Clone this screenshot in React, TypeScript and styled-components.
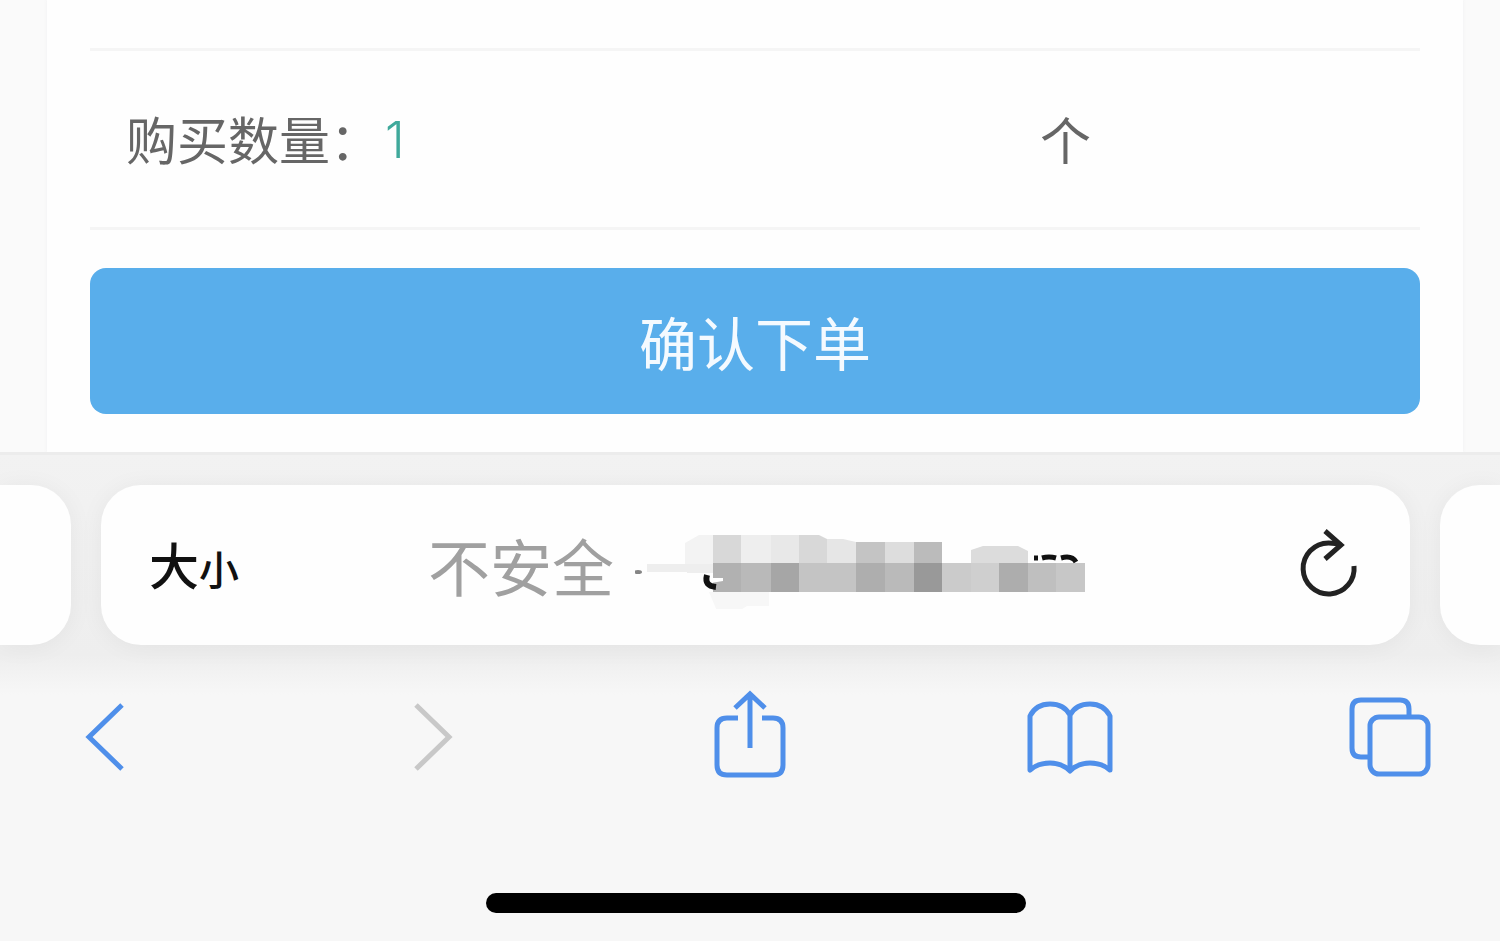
import React from "react";
import styled, { createGlobalStyle } from "styled-components";

const cjk = '"Noto Sans CJK SC", sans-serif';

const GlobalStyle = createGlobalStyle`
  *, *::before, *::after { box-sizing: border-box; }
  body { margin: 0; background: #fff; font-family: ${cjk}; }
  button { border: 0; padding: 0; background: none; font-family: inherit; cursor: pointer; }
`;

const Screen = styled.main`
  display: flex;
  flex-direction: column;
  overflow: hidden;
`;

const Page = styled.section`
  padding: 0 37px 0 47px;
  background: #fafafa;
`;

const OrderForm = styled.form`
  padding: 48px 43px 38px;
  background: #fefefe;
  box-shadow: 0 0 4px #f0f0f2;
`;

const QuantityRow = styled.div`
  display: flex;
  align-items: center;
  height: 182px;
  margin-bottom: 38px;
  padding: 0 0 2px 36px;
  border-top: 3px solid #f5f5f5;
  border-bottom: 3px solid #f5f5f5;
  color: #666;
  font-size: 51px;
  line-height: 72px;
`;

const QuantityInput = styled.input`
  flex: 1;
  min-width: 0;
  height: 72px;
  padding: 4px 0 0 4px;
  border: 0;
  outline: 0;
  background: none;
  color: #3fa99b;
  font: 300 50px/68px Inter, sans-serif;
`;

const Unit = styled.span`
  width: 380px;
`;

const SubmitButton = styled.button`
  display: block;
  width: 100%;
  height: 146px;
  border-radius: 16px;
  background: #59aeeb;
  color: #f4faff;
  font-size: 58px;
  line-height: 84px;
`;

const Browser = styled.section`
  border-top: 3px solid #ececec;
  background: linear-gradient(#f2f2f2 0, #eeeeee 200px, #f7f7f7 240px);
`;

const TabStrip = styled.div`
  display: flex;
  gap: 30px;
  padding-top: 30px;
`;

const TabEdge = styled.div<{ $side: "left" | "right" }>`
  width: ${(p) => (p.$side === "left" ? 71 : 60)}px;
  height: 160px;
  border-radius: ${(p) => (p.$side === "left" ? "0 40px 40px 0" : "40px 0 0 40px")};
  background: #fefefe;
  box-shadow: 0 2px 24px rgba(0, 0, 0, 0.05);
`;

const AddressBar = styled.div`
  display: flex;
  flex: 1;
  align-items: center;
  justify-content: space-between;
  height: 160px;
  padding: 0 48px;
  border-radius: 40px;
  background: #fefefe;
  box-shadow: 0 2px 24px rgba(0, 0, 0, 0.05);
`;

const TextSizeButton = styled.button`
  color: #111;
  font-size: 50px;
  font-weight: 500;
  line-height: 72px;
`;

const SmallGlyph = styled.span`
  font-size: 40px;
`;

const Address = styled.div`
  display: flex;
  align-items: center;
  gap: 21px;
  padding-right: 22px;
  color: #a0a0a0;
  font-size: 62px;
  line-height: 88px;
`;

const ReloadButton = styled.button`
  display: flex;
`;

const Toolbar = styled.nav`
  display: flex;
  justify-content: space-between;
  padding: 45px 64px 0 60px;
`;

const ToolButton = styled.button<{ $muted?: boolean }>`
  display: flex;
  color: ${(p) => (p.$muted ? "#c8c8c8" : "#4f8fea")};
  svg {
    fill: none;
    stroke: currentColor;
    stroke-width: 5;
  }
`;

const HomeArea = styled.div`
  display: flex;
  justify-content: center;
  padding: 107px 0 28px 11px;
`;

const HomeIndicator = styled.div`
  width: 36vw;
  height: 20px;
  border-radius: 10px;
  background: #000;
`;

const upperBlocks = [
  [50, 28, "#d8d8d8"], [78, 30, "#eeeeee"], [108, 28, "#e8e8e8"],
];
const lowerBlocks = [
  [50, 28, "#b1b1b1"], [78, 30, "#b9b9b9"], [108, 28, "#a6a6a6"], [136, 57, "#c4c4c4"],
  [193, 29, "#aeaeae"], [222, 29, "#bababa"], [251, 28, "#999999"], [279, 29, "#cbcbcb"],
  [308, 28, "#cfcfcf"], [336, 29, "#adadad"], [365, 28, "#bfbfbf"], [393, 29, "#c7c7c7"],
];

function MaskedHost() {
  return (
    <svg width="452" height="88" viewBox="-28 -2 452 88" role="img" aria-label="网址已隐藏">
      <path d="M-16 41H50V50H24V49H-16z" fill="#eeeeee" />
      <ellipse cx="-25" cy="49" rx="4" ry="2" fill="#858585" />
      <path d="M50 12H36l-14 8v21h28z" fill="#f3f3f3" />
      {upperBlocks.map(([x, w, c]) => (
        <rect key={x} x={x} y="12" width={w} height="29" fill={String(c)} />
      ))}
      <path d="M136 12h20l8 4v25h-28z" fill="#d8d8d8" />
      <path d="M164 16h16l13 3v22h-29z" fill="#e6e6e6" />
      <rect x="193" y="19" width="29" height="22" fill="#c4c4c4" />
      <rect x="222" y="19" width="29" height="22" fill="#dddddd" />
      <rect x="251" y="19" width="28" height="22" fill="#bbbbbb" />
      <path d="M308 27l12-4h35l10 5v13h-57z" fill="#dcdcdc" />
      {lowerBlocks.map(([x, w, c]) => (
        <rect key={x} x={x} y="40" width={w} height="29" fill={String(c)} />
      ))}
      <path d="M46 69h60v14H84l-8 5H54z" fill="#f7f7f7" />
      <path d="M46 55h14v3l-12 2z" fill="#fff" />
      <path d="M44 52c-2 8 1 11 9 12" stroke="#111" strokeWidth="6" fill="none" />
      <path d="M371 35h4M379 35q7-2 14 0M398 35q11-3 15 4" stroke="#111" strokeWidth="5" fill="none" />
    </svg>
  );
}

function Glyph({ children }: { children: React.ReactNode }) {
  return (
    <svg width="88" height="96" viewBox="0 0 88 96" aria-hidden="true">
      {children}
    </svg>
  );
}

export default function App() {
  return (
    <Screen>
      <GlobalStyle />
      <Page>
        <OrderForm onSubmit={(e) => e.preventDefault()}>
          <QuantityRow>
            <label htmlFor="quantity">购买数量：</label>
            <QuantityInput id="quantity" inputMode="numeric" defaultValue="1" />
            <Unit>个</Unit>
          </QuantityRow>
          <SubmitButton type="submit">确认下单</SubmitButton>
        </OrderForm>
      </Page>
      <Browser>
        <TabStrip>
          <TabEdge $side="left" />
          <AddressBar>
            <TextSizeButton type="button">
              大<SmallGlyph>小</SmallGlyph>
            </TextSizeButton>
            <Address>
              <span>不安全</span>
              <MaskedHost />
            </Address>
            <ReloadButton type="button" aria-label="重新载入">
              <svg width="64" height="80" viewBox="0 0 64 80" fill="none" stroke="#222" strokeWidth="5">
                <path d="M56 41A25.500 25.500 0 1 1 30.500 18Q38 18 43 20" />
                <path d="M27 6L43 20L27 34" />
              </svg>
            </ReloadButton>
          </AddressBar>
          <TabEdge $side="right" />
        </TabStrip>
        <Toolbar aria-label="浏览器工具栏">
          <ToolButton type="button" aria-label="后退">
            <Glyph><path d="M62 15L29 47L62 79" /></Glyph>
          </ToolButton>
          <ToolButton type="button" aria-label="前进" $muted disabled>
            <Glyph><path d="M34 15L67 47L34 79" /></Glyph>
          </ToolButton>
          <ToolButton type="button" aria-label="分享">
            <Glyph>
              <path d="M34 28H23Q13 28 13 38V75Q13 85 23 85H69Q79 85 79 75V38Q79 28 69 28H58" />
              <path d="M46 58V4M31 18L46 4L61 18" />
            </Glyph>
          </ToolButton>
          <ToolButton type="button" aria-label="书签">
            <Glyph>
              <path strokeLinejoin="round" d="M4 80V26Q10 14 24 14Q38 14 44 25Q50 14 64 14Q78 14 84 26V80Q76 73 64 73Q52 73 44 81Q36 73 24 73Q12 73 4 80ZM44 25V81" />
            </Glyph>
          </ToolButton>
          <ToolButton type="button" aria-label="标签页">
            <Glyph>
              <path d="M21 67H13Q4 67 4 58V19Q4 10 13 10H52Q61 10 61 19V27" />
              <rect x="22" y="27" width="58" height="57" rx="9" />
            </Glyph>
          </ToolButton>
        </Toolbar>
        <HomeArea>
          <HomeIndicator />
        </HomeArea>
      </Browser>
    </Screen>
  );
}
